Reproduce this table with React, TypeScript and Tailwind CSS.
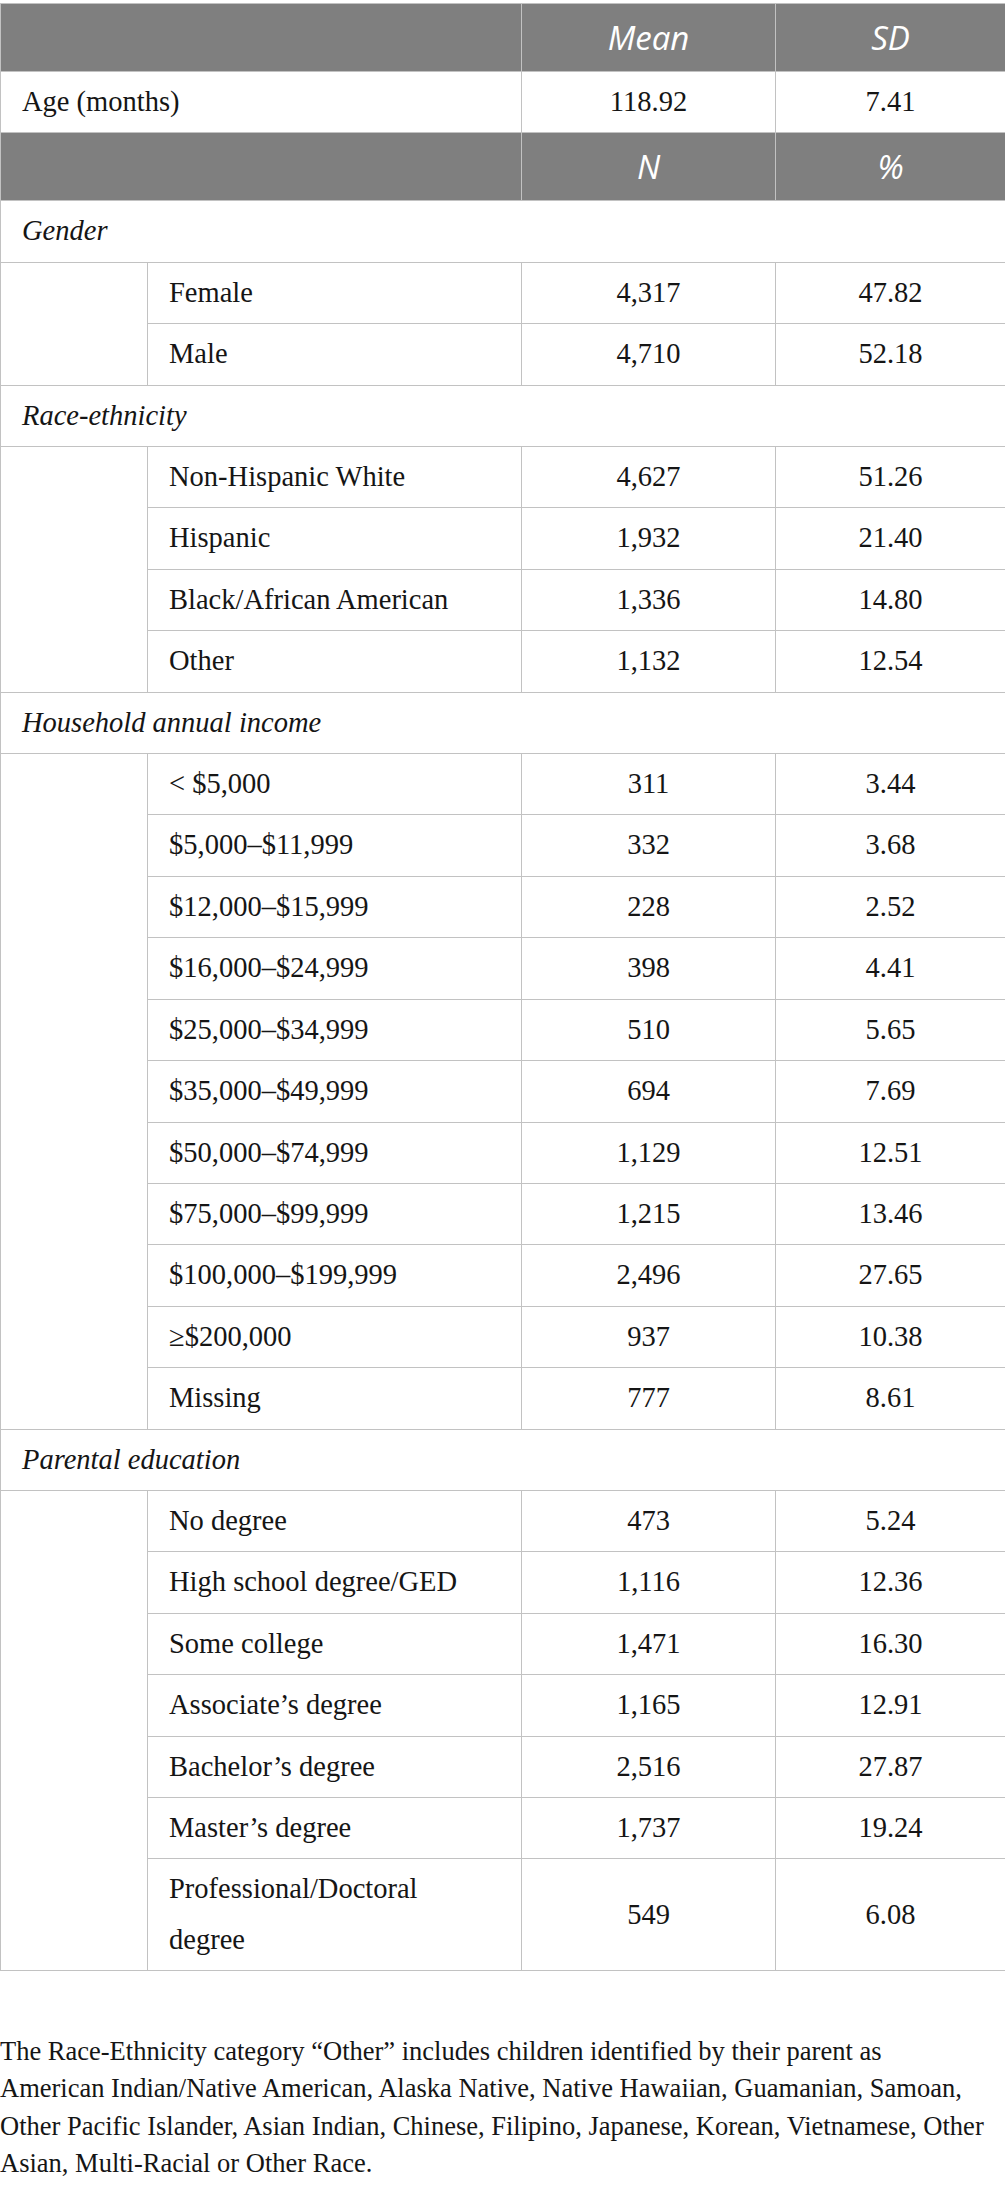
import { Fragment } from "react";

const GROUPS = [
  {
    label: "Gender",
    rows: [
      ["Female", "4,317", "47.82"],
      ["Male", "4,710", "52.18"],
    ],
  },
  {
    label: "Race-ethnicity",
    rows: [
      ["Non-Hispanic White", "4,627", "51.26"],
      ["Hispanic", "1,932", "21.40"],
      ["Black/African American", "1,336", "14.80"],
      ["Other", "1,132", "12.54"],
    ],
  },
  {
    label: "Household annual income",
    rows: [
      ["< $5,000", "311", "3.44"],
      ["$5,000–$11,999", "332", "3.68"],
      ["$12,000–$15,999", "228", "2.52"],
      ["$16,000–$24,999", "398", "4.41"],
      ["$25,000–$34,999", "510", "5.65"],
      ["$35,000–$49,999", "694", "7.69"],
      ["$50,000–$74,999", "1,129", "12.51"],
      ["$75,000–$99,999", "1,215", "13.46"],
      ["$100,000–$199,999", "2,496", "27.65"],
      ["≥$200,000", "937", "10.38"],
      ["Missing", "777", "8.61"],
    ],
  },
  {
    label: "Parental education",
    rows: [
      ["No degree", "473", "5.24"],
      ["High school degree/GED", "1,116", "12.36"],
      ["Some college", "1,471", "16.30"],
      ["Associate’s degree", "1,165", "12.91"],
      ["Bachelor’s degree", "2,516", "27.87"],
      ["Master’s degree", "1,737", "19.24"],
      ["Professional/Doctoral\ndegree", "549", "6.08"],
    ],
  },
];

const cell = "border border-[#c2c2c2] px-[21px] py-[5px] leading-[50.4px] align-middle font-[Liberation_Serif,serif]";
const head =
  "border border-[#c2c2c2] bg-[#7f7f7f] py-[5px] leading-[57px] text-center text-white italic font-normal text-[33px] font-[Open_Sans,sans-serif]";

export default function App() {
  return (
    <div className="w-[1005px] bg-white pt-[3px] text-[#151515] font-[Liberation_Serif,serif]">
      <table className="w-[1005px] table-fixed border-collapse text-[28.5px]">
        <colgroup>
          <col className="w-[147px]" />
          <col className="w-[374px]" />
          <col className="w-[254px]" />
          <col className="w-[230px]" />
        </colgroup>
        <tbody>
          <tr>
            <th colSpan={2} className={head}></th>
            <th className={head}>Mean</th>
            <th className={head}>SD</th>
          </tr>
          <tr>
            <td colSpan={2} className={cell}>Age (months)</td>
            <td className={cell + " text-center"}>118.92</td>
            <td className={cell + " text-center"}>7.41</td>
          </tr>
          <tr>
            <th colSpan={2} className={head}></th>
            <th className={head}>N</th>
            <th className={head}>%</th>
          </tr>
          {GROUPS.map((g) => (
            <Fragment key={g.label}>
              <tr>
                <td colSpan={4} className={cell + " italic"}>{g.label}</td>
              </tr>
              {g.rows.map((r, i) => (
                <tr key={r[0]}>
                  {i === 0 && <td rowSpan={g.rows.length} className={cell}></td>}
                  <td className={cell + " whitespace-pre-line"}>{r[0]}</td>
                  <td className={cell + " text-center"}>{r[1]}</td>
                  <td className={cell + " text-center"}>{r[2]}</td>
                </tr>
              ))}
            </Fragment>
          ))}
        </tbody>
      </table>

      {/* footnote */}
      <p className="mt-[62px] text-[26.5px] leading-[37.3px] font-[Liberation_Serif,serif]">
        The Race-Ethnicity category “Other” includes children identified by their parent as
        <br />
        American Indian/Native American, Alaska Native, Native Hawaiian, Guamanian, Samoan,
        <br />
        Other Pacific Islander, Asian Indian, Chinese, Filipino, Japanese, Korean, Vietnamese, Other
        <br />
        Asian, Multi-Racial or Other Race.
      </p>
    </div>
  );
}
